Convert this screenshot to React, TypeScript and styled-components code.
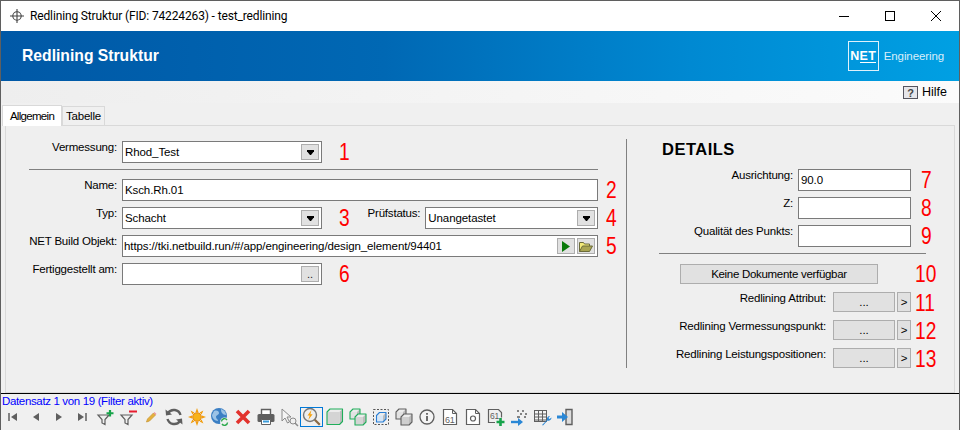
import React from "react";
import styled, { createGlobalStyle } from "styled-components";

const Global = createGlobalStyle`
  html, body { margin: 0; padding: 0; background: #f0f0f0; }
  body { font-family: "Liberation Sans", Arial, sans-serif; font-size: 11.5px; letter-spacing: -0.2px; color: #000; }
  * { box-sizing: border-box; }
`;

const Window = styled.div`
  width: 960px; height: 430px; display: flex; flex-direction: column; overflow: hidden;
  background: #f0f0f0; border: 1px solid #5f5f5f; border-bottom: 0;
`;
const TitleBar = styled.div`
  height: 30px; flex: none; background: #fff; display: flex; align-items: center; padding-left: 9px;
`;
const TitleText = styled.span`
  margin-left: 6px; font-family: Roboto, sans-serif; font-size: 12px; letter-spacing: -0.14px; flex: 1; white-space: nowrap;
`;
const WinButton = styled.div`
  width: 46px; height: 30px; display: flex; align-items: center; justify-content: center;
`;
const Banner = styled.div`
  height: 50px; flex: none; display: flex; align-items: center; justify-content: space-between;
  background: linear-gradient(90deg, #0058a6 0%, #0068b4 40%, #0089d2 72%, #00a0e3 100%);
  color: #fff; padding: 0 15px 0 21px;
`;
const BannerTitle = styled.h1`
  margin: 0; font-size: 15.7px; letter-spacing: 0; font-weight: 700; font-family: "Liberation Sans", sans-serif;
`;
const Logo = styled.div`
  display: flex; align-items: center; gap: 5px;
`;
const LogoBox = styled.div`
  width: 31px; height: 30px; border: 1px solid #dff1fb; display: flex; flex-direction: column; align-items: center; padding-top: 8px;
  font-weight: 700; font-size: 12.5px; line-height: 12px; letter-spacing: 0.3px; color: #fff;
`;
const LogoText = styled.span`
  font-size: 11.5px; letter-spacing: -0.1px; color: #d8eefa;
`;
const LogoLine = styled.i`
  display: block; width: 16px; height: 1px; background: #fff; margin: 0 0 0 10px;
`;
const HelpBar = styled.div`
  height: 22px; flex: none; display: flex; justify-content: flex-end; align-items: center; gap: 4px; padding-right: 12px;
  background: linear-gradient(90deg, #eeeeee 0%, #fbfbfb 100%); font-size: 12.5px; letter-spacing: 0;
`;
const TabStrip = styled.div`
  height: 22px; flex: none; display: flex; align-items: flex-end; padding-left: 1px;
`;
const Tab = styled.div<{ $active?: boolean }>`
  height: ${(p) => (p.$active ? "21px" : "19px")};
  width: ${(p) => (p.$active ? "60px" : "43px")};
  display: flex; align-items: center; justify-content: center;
  background: ${(p) => (p.$active ? "#fff" : "#f0f0f0")};
  border: 1px solid #d9d9d9; border-bottom: 0;
  letter-spacing: ${(p) => (p.$active ? "-0.7px" : "-0.2px")};
  margin-bottom: ${(p) => (p.$active ? "-1px" : "0")};
  position: relative; z-index: ${(p) => (p.$active ? 1 : 0)};
`;
const TabPane = styled.div`
  height: 268px; flex: none; margin: 0 4px; background: #efefef; border: 1px solid #d9d9d9; display: flex;
`;
const LeftPane = styled.div`
  width: 620px; flex: none; padding: 15px 0 0 0;
`;
const Row = styled.div`
  display: flex; height: 22px; margin-bottom: 6px; align-items: flex-start;
`;
const Label = styled.label<{ $w: number }>`
  width: ${(p) => p.$w}px; flex: none; text-align: right; margin-right: 5px; line-height: 13px; white-space: nowrap;
`;
const Field = styled.div<{ $w: number }>`
  width: ${(p) => p.$w}px; height: 22px; flex: none; background: #fff; border: 1px solid #7a7a7a;
  display: flex; align-items: center; justify-content: space-between; padding: 0 2px; letter-spacing: -0.1px; white-space: nowrap;
`;
const UrlText = styled.span`
  margin-left: -1px;
`;
const SquareButton = styled.button`
  width: 18px; height: 16px; flex: none; padding: 0; background: #e1e1e1; border: 1px solid #adadad; display: flex; align-items: center; justify-content: center;
  font: 11px "Liberation Sans", sans-serif; color: #222;
`;
const Pair = styled.div`
  display: flex; gap: 2px;
`;
const Num = styled.span<{ $ml: number }>`
  display: inline-block; color: #ff0000; font-size: 24px; line-height: 22px; letter-spacing: 0; white-space: nowrap;
  margin-left: ${(p) => p.$ml}px; transform: scaleX(0.8); transform-origin: left center;
`;
const Sep = styled.hr<{ $ml: number; $w: number; $mb: number }>`
  margin: 0 0 ${(p) => p.$mb}px ${(p) => p.$ml}px; width: ${(p) => p.$w}px; border: 0; height: 1px; background: #808080;
`;
const Divider = styled.div`
  width: 1px; height: 229px; flex: none; margin-top: 13px; background: #808080;
`;
const RightPane = styled.div`
  flex: 1; padding: 13px 0 0 32px;
`;
const Details = styled.h2`
  margin: 0 0 10px 3px; font-size: 16.5px; line-height: 20px; font-weight: 700; letter-spacing: 0.5px;
`;
const WideButton = styled.button`
  display: block; width: 198px; height: 20px; margin: 0; padding: 0; background: #e1e1e1; border: 1px solid #adadad;
  font: 11.5px "Liberation Sans", sans-serif; letter-spacing: -0.3px; color: #000;
`;
const ButtonRow = styled.div`
  display: flex; align-items: center; margin: 0 0 8px 21px; height: 20px;
`;
const ActionRow = styled.div`
  display: flex; height: 20px; margin-bottom: 8px; align-items: flex-start;
`;
const ActionLabel = styled.label`
  width: 167px; flex: none; text-align: right; margin-right: 7px; line-height: 13px; white-space: nowrap;
`;
const GreyButton = styled.button<{ $w: number; $mr?: number }>`
  width: ${(p) => p.$w}px; height: 20px; flex: none; padding: 0; margin-right: ${(p) => p.$mr ?? 0}px; background: #e1e1e1; border: 1px solid #adadad;
  font: 11.5px "Liberation Sans", sans-serif; color: #000;
`;
const Status = styled.div`
  height: 14px; flex: none; border-top: 1px solid #000; color: #0000ff; line-height: 14px; padding-left: 1px; letter-spacing: -0.35px; background: #f0f0f0;
`;
const Toolbar = styled.div`
  flex: 1; display: flex; align-items: flex-start;
`;
const Tool = styled.div<{ $on?: boolean }>`
  width: 23px; height: 20px; flex: none; display: flex; align-items: center; justify-content: center;
  outline: ${(p) => (p.$on ? "1px solid #0078d7" : "none")}; outline-offset: -1px;
`;

const Ic = ({ children }: { children: React.ReactNode }) => (
  <svg width="20" height="20" viewBox="0 0 20 20" fill="none">{children}</svg>
);

const G = "#5f5f5f";
const Cube = ({ x, y, s, stroke, tint = "#d4d4d4" }: { x: number; y: number; s: number; stroke: string; tint?: string }) => (
  <g strokeLinejoin="round">
    <path d={`M${x} ${y + 3}l3-3h${s}l-3 3z`} fill="#ececec" />
    <path d={`M${x + s} ${y + 3}l3-3v${s}l-3 3z`} fill="#bdbdbd" />
    <path d={`M${x} ${y + 3}h${s}v${s}h-${s}z`} fill={tint} />
    <path d={`M${x} ${y + 3}l3-3h${s}v${s}l-3 3h-${s}z`} stroke={stroke} strokeWidth="1.1" />
  </g>
);
const Doc = ({ children }: { children?: React.ReactNode }) => (
  <>
    <path d="M3.5 2.5h9l4 4v11h-13z" stroke={G} strokeWidth="1.2" fill="#fff" />
    <path d="M12.5 2.5v4h4" stroke={G} />
    {children}
  </>
);
const FilterBody = () => <path d="M3 8h11l-4 4.500v5l-3-1.500v-3.500z" stroke={G} strokeWidth="1.2" />;
const tools: React.ReactNode[] = [
  <Ic><path d="M6 6v8" stroke={G} strokeWidth="1.5" /><path d="M14 6v8l-6-4z" fill={G} /></Ic>,
  <Ic><path d="M13 6v8l-6-4z" fill={G} /></Ic>,
  <Ic><path d="M7 6v8l6-4z" fill={G} /></Ic>,
  <Ic><path d="M14 6v8" stroke={G} strokeWidth="1.5" /><path d="M6 6v8l6-4z" fill={G} /></Ic>,
  <Ic><FilterBody /><path d="M15 3v6.500M11.500 6.250h7" stroke="#17a34a" strokeWidth="2.200" /></Ic>,
  <Ic><FilterBody /><path d="M11 4.500h8" stroke="#e81c2e" strokeWidth="2" /></Ic>,
  <Ic><path d="M5.500 15l1-3 6-6 2 2-6 6z" fill="#e5b13c" stroke="#c8983a" strokeWidth=".8" /><path d="M12.500 6l1-1 2 2-1 1z" fill="#e99" /></Ic>,
  <Ic><path d="M16.500 8A7 7 0 0 0 4 6" stroke={G} strokeWidth="2.400" /><path d="M1.500 2.500l.5 6 6-1z" fill={G} /><path d="M3.500 12A7 7 0 0 0 16 14" stroke={G} strokeWidth="2.400" /><path d="M18.500 17.500l-.5-6-6 1z" fill={G} /></Ic>,
  <Ic><circle cx="10" cy="10" r="4.300" fill="#f7b21a" stroke="#e8870a" /><path d="M10 1l1.400 4h-2.800zM10 19l1.400-4h-2.800zM1 10l4-1.400v2.800zM19 10l-4-1.400v2.800zM3.600 3.600l3.800 1.800-2 2zM16.400 3.600l-1.800 3.800-2-2zM3.600 16.400l1.800-3.800 2 2zM16.400 16.400l-3.800-1.800 2-2z" fill="#f29d0c" /></Ic>,
  <Ic><circle cx="9" cy="9" r="8" fill="#3b7fc4" /><path d="M4 4c3-1 5 0 5 2s-3 2-3 4 2 2 2 4c-3 0-6-3-6-6zM11 2c3 1 5 3 5 6-2 0-3-1-4-2s-1-3-1-4z" fill="#9cc3e6" /><circle cx="14.500" cy="15" r="4.500" fill="#f0f0f0" /><path d="M11.500 14.500a3 3 0 0 1 5.500-1.500M17.500 15.500a3 3 0 0 1-5.500 1.500" stroke="#2aa84a" strokeWidth="1.400" /></Ic>,
  <Ic><path d="M4 4l12 12M16 4L4 16" stroke="#e2322d" strokeWidth="3.600" /></Ic>,
  <Ic><path d="M5.500 7V2.500h9V7" stroke={G} strokeWidth="1.400" fill="#fff" /><rect x="1.500" y="7" width="17" height="8" rx="1.500" fill={G} /><path d="M5.500 12.500h9v5h-9z" fill="#fff" stroke={G} /><path d="M7 14.500h6" stroke="#3b9bd8" strokeWidth="2" /></Ic>,
  <Ic><path d="M3 2v12l3-3 2.500 5 2-1-2.500-5h4z" fill="#f4f4f4" stroke="#8a8a8a" /><circle cx="14" cy="14" r="3" stroke="#8a8a8a" /><path d="M16 16l3 3" stroke="#8a8a8a" strokeWidth="1.500" /></Ic>,
  <Ic><circle cx="8" cy="8" r="6.500" fill="#eee" stroke="#777" strokeWidth="1.400" /><path d="M9.500 3L5.500 8.500h2.200L6.300 13l4.300-5.700H8.400z" fill="#f5a00b" /><path d="M12.800 12.800l5 5" stroke="#8a6a45" strokeWidth="2.200" /></Ic>,
  <Ic><Cube x={2} y={2} s={12.500} stroke="#1fae5a" /></Ic>,
  <Ic><Cube x={2} y={2} s={7} stroke="#1fae5a" tint="#e2e2e2" /><Cube x={7} y={7} s={8} stroke="#1fae5a" /></Ic>,
  <Ic><rect x="2.500" y="2.500" width="15" height="15" stroke="#555" strokeDasharray="2 1.500" /><Cube x={5.500} y={5.500} s={6.500} stroke="#2a7fd5" tint="#d6e6f6" /></Ic>,
  <Ic><Cube x={2} y={2} s={7} stroke={G} tint="#e2e2e2" /><Cube x={7} y={7} s={8} stroke={G} tint="#cfcfcf" /></Ic>,
  <Ic><circle cx="10" cy="10" r="7" stroke={G} strokeWidth="1.300" fill="#f4f4f4" /><path d="M10 6v1.800M10 9v5" stroke={G} strokeWidth="1.800" /></Ic>,
  <Ic><Doc><text x="5" y="15.500" fontSize="9" fontFamily="Liberation Sans" fill={G}>61</text></Doc></Ic>,
  <Ic><Doc><circle cx="10" cy="11.500" r="2.500" stroke={G} strokeWidth="1.200" /></Doc></Ic>,
  <Ic><path d="M9 15.500H2.500v-13h10l3 3v5" stroke={G} strokeWidth="1.200" /><text x="4" y="12" fontSize="8.500" fontFamily="Liberation Sans" fill={G}>61</text><path d="M14.500 11v8M10.500 15h8" stroke="#16a34a" strokeWidth="2.600" /></Ic>,
  <Ic><path d="M8 4h2M13 4h2M11 7h2M16 7h2M8 10h3M15 10h2" stroke={G} strokeWidth="1.400" /><path d="M2 15h8" stroke="#2a87d5" strokeWidth="2.400" /><path d="M9 11l5 4-5 4z" fill="#2a87d5" /></Ic>,
  <Ic><rect x="2.500" y="3.500" width="12" height="11" stroke={G} fill="#f4f4f4" /><path d="M2.500 7h12M2.500 10h12M2.500 13h12M6.500 3.500v11M10.500 3.500v11" stroke={G} /><path d="M10 18l5-5a3 3 0 0 1 3-4l-1.500 2 1 1 2-1.500a3 3 0 0 1-4 3l-4.500 5z" fill="#2a87d5" /></Ic>,
  <Ic><path d="M11 2.500h6v15h-6z" stroke={G} strokeWidth="1.400" fill="#ddd" /><path d="M2 10h6" stroke="#2a87d5" strokeWidth="3" /><path d="M7 5l6 5-6 5z" fill="#2a87d5" /></Ic>,
];

const Tri = () => (
  <svg width="7" height="5" viewBox="0 0 7 5"><path d="M0 0h7v1.200L4 5H3L0 1.200z" fill="#000" /></svg>
);

const Combo = ({ w, value }: { w: number; value: string }) => (
  <Field $w={w}>
    {value}
    <SquareButton><Tri /></SquareButton>
  </Field>
);

export default function App() {
  return (
    <>
      <Global />
      <Window>
        <TitleBar>
          <svg width="14" height="14" viewBox="0 0 14 14" fill="none" stroke="#444" strokeWidth="1.100">
            <circle cx="7" cy="7" r="4.200" /><path d="M7 0v14M0 7h14" />
          </svg>
          <TitleText>Redlining Struktur (FID: 74224263) - test_redlining</TitleText>
          <WinButton><svg width="10" height="10" viewBox="0 0 10 10"><path d="M0 5.500h10" stroke="#000" /></svg></WinButton>
          <WinButton><svg width="10" height="10" viewBox="0 0 10 10"><rect x=".5" y=".5" width="9" height="9" fill="none" stroke="#000" /></svg></WinButton>
          <WinButton><svg width="10" height="10" viewBox="0 0 10 10"><path d="M0 0l10 10M10 0L0 10" stroke="#000" strokeWidth="1" /></svg></WinButton>
        </TitleBar>
        <Banner>
          <BannerTitle>Redlining Struktur</BannerTitle>
          <Logo>
            <LogoBox>
              <span>NET</span>
              <LogoLine />
            </LogoBox>
            <LogoText>Engineering</LogoText>
          </Logo>
        </Banner>
        <HelpBar>
          <svg width="15" height="13" viewBox="0 0 15 13">
            <rect x=".5" y=".5" width="14" height="12" fill="#e6e6ea" stroke="#55555f" />
            <text x="7.500" y="10.500" textAnchor="middle" fontSize="11" fontWeight="700" fontFamily="Liberation Sans" fill="#444">?</text>
          </svg>
          Hilfe
        </HelpBar>
        <TabStrip>
          <Tab $active>Allgemein</Tab>
          <Tab>Tabelle</Tab>
        </TabStrip>
        <TabPane>
          <LeftPane>
            <Row>
              <Label $w={111}>Vermessung:</Label>
              <Combo w={200} value="Rhod_Test" />
              <Num $ml={17}>1</Num>
            </Row>
            <Sep $ml={23} $w={569} $mb={9} />
            <Row>
              <Label $w={111}>Name:</Label>
              <Field $w={476}>Ksch.Rh.01</Field>
              <Num $ml={8}>2</Num>
            </Row>
            <Row>
              <Label $w={111}>Typ:</Label>
              <Combo w={200} value="Schacht" />
              <Num $ml={17}>3</Num>
              <Label $w={68}>Prüfstatus:</Label>
              <Combo w={173} value="Unangetastet" />
              <Num $ml={8}>4</Num>
            </Row>
            <Row>
              <Label $w={111}>NET Build Objekt:</Label>
              <Field $w={476}>
                <UrlText>https://tki.netbuild.run/#/app/engineering/design_element/94401</UrlText>
                <Pair>
                  <SquareButton>
                    <svg width="8" height="11" viewBox="0 0 8 11"><path d="M0 0l8 5.500L0 11z" fill="#0a7a0a" /></svg>
                  </SquareButton>
                  <SquareButton>
                    <svg width="14" height="11" viewBox="0 0 14 11">
                      <path d="M.5 10.500V1.500h4l1 1.500h5v2" fill="#f2ea7a" stroke="#6b6b3a" />
                      <path d="M.5 10.500l3-5.500h10l-3 5.500z" fill="#a9a552" stroke="#6b6b3a" />
                    </svg>
                  </SquareButton>
                </Pair>
              </Field>
              <Num $ml={8}>5</Num>
            </Row>
            <Row>
              <Label $w={111}>Fertiggestellt am:</Label>
              <Field $w={200}>
                <span />
                <SquareButton>..</SquareButton>
              </Field>
              <Num $ml={17}>6</Num>
            </Row>
          </LeftPane>
          <Divider />
          <RightPane>
            <Details>DETAILS</Details>
            <Row>
              <Label $w={134}>Ausrichtung:</Label>
              <Field $w={113}>90.0</Field>
              <Num $ml={10}>7</Num>
            </Row>
            <Row>
              <Label $w={134}>Z:</Label>
              <Field $w={113} />
              <Num $ml={10}>8</Num>
            </Row>
            <Row>
              <Label $w={134}>Qualität des Punkts:</Label>
              <Field $w={113} />
              <Num $ml={10}>9</Num>
            </Row>
            <Sep $ml={0} $w={267} $mb={10} />
            <ButtonRow>
              <WideButton>Keine Dokumente verfügbar</WideButton>
              <Num $ml={37}>10</Num>
            </ButtonRow>
            <ActionRow>
              <ActionLabel>Redlining Attribut:</ActionLabel>
              <GreyButton $w={62} $mr={2}>...</GreyButton>
              <GreyButton $w={14}>&gt;</GreyButton>
              <Num $ml={4}>11</Num>
            </ActionRow>
            <ActionRow>
              <ActionLabel>Redlining Vermessungspunkt:</ActionLabel>
              <GreyButton $w={62} $mr={2}>...</GreyButton>
              <GreyButton $w={14}>&gt;</GreyButton>
              <Num $ml={4}>12</Num>
            </ActionRow>
            <ActionRow>
              <ActionLabel>Redlining Leistungspositionen:</ActionLabel>
              <GreyButton $w={62} $mr={2}>...</GreyButton>
              <GreyButton $w={14}>&gt;</GreyButton>
              <Num $ml={4}>13</Num>
            </ActionRow>
          </RightPane>
        </TabPane>
        <Status>Datensatz 1 von 19 (Filter aktiv)</Status>
        <Toolbar>
          {tools.map((t, i) => (
            <Tool key={i} $on={i === 13}>{t}</Tool>
          ))}
        </Toolbar>
      </Window>
    </>
  );
}
